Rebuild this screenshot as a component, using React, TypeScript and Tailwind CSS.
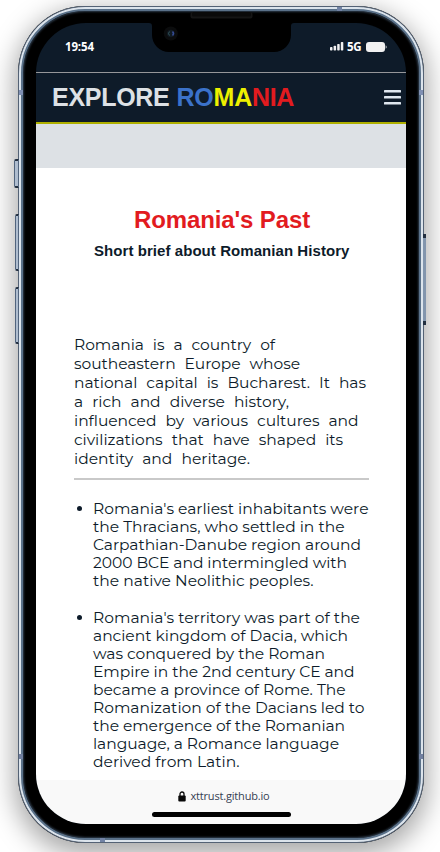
import { useLayoutEffect, useRef } from "react";

type FitProps = { text: string; width: number; className?: string };

// One line of copy whose tracking is tuned so that it spans the given width.
function FitLine({ text, width, className = "" }: FitProps) {
  const ref = useRef<HTMLSpanElement>(null);
  useLayoutEffect(() => {
    const el = ref.current;
    if (!el) return;
    el.style.letterSpacing = "0px";
    const natural = el.getBoundingClientRect().width;
    el.style.letterSpacing = `${(width - natural) / text.length}px`;
  }, [text, width]);
  return (
    <span className="block whitespace-nowrap">
      <span ref={ref} className={`inline-block whitespace-nowrap ${className}`}>{text}</span>
    </span>
  );
}

const intro: [string, number][] = [
  ["Romania is a country of", 201],
  ["southeastern Europe whose", 226],
  ["national capital is Bucharest. It has", 292],
  ["a rich and diverse history,", 215],
  ["influenced by various cultures and", 284.5],
  ["civilizations that have shaped its", 269],
  ["identity and heritage.", 176],
];

const facts: [string, number][][] = [
  [
    ["Romania's earliest inhabitants were", 275.5],
    ["the Thracians, who settled in the", 251.5],
    ["Carpathian-Danube region around", 268],
    ["2000 BCE and intermingled with", 254],
    ["the native Neolithic peoples.", 220.5],
  ],
  [
    ["Romania's territory was part of the", 267],
    ["ancient kingdom of Dacia, which", 255],
    ["was conquered by the Roman", 232],
    ["Empire in the 2nd century CE and", 261.5],
    ["became a province of Rome. The", 252.5],
    ["Romanization of the Dacians led to", 271.5],
    ["the emergence of the Romanian", 252],
    ["language, a Romance language", 246],
    ["derived from Latin.", 146.5],
  ],
];

const sideButton = "absolute rounded-l-[2px] border border-[#51647d] border-y-[#222f40] border-y-2 bg-[#afbdcf]";

function StatusBar() {
  return (
    <div className="flex h-[50px] shrink-0 justify-between border-b border-[#96979a] pl-[29px] pr-[19px] pt-[15px]">
      <span className="font-['Open_Sans',sans-serif] text-[11.5px] font-bold leading-[17px] tracking-[-0.15px] text-white">19:54</span>
      <div className="flex h-[17px] items-center">
        <svg className="-mt-px" width="14" height="9" viewBox="0 0 14 9" fill="#f1f1f1">
          <rect x="0" y="5" width="2.5" height="3.5" rx=".7" />
          <rect x="3.6" y="3.7" width="2.5" height="4.8" rx=".7" />
          <rect x="7.2" y="2" width="2.5" height="6.5" rx=".7" />
          <rect x="10.8" y="0" width="2.5" height="8.5" rx=".7" />
        </svg>
        <span className="ml-[3px] w-[15px] font-['Open_Sans',sans-serif] text-[11.5px] font-bold leading-[17px] tracking-[-0.3px] text-white">5G</span>
        <svg className="ml-[4px]" width="21" height="10" viewBox="0 0 21 10" fill="#f1f1f1">
          <rect x="0" y="0" width="19" height="10" rx="3" />
          <path d="M19.7 3.2c1.2.8 1.2 2.8 0 3.6z" />
        </svg>
      </div>
    </div>
  );
}

export default function App() {
  return (
    <div className="flex h-[852px] w-[440px] overflow-hidden bg-white pl-[18px] pt-[6px]">
      <div className="relative h-[837px] w-[406px] shrink-0 rounded-[67px] bg-black shadow-[0_8px_26px_4px_rgba(0,0,0,0.34)]">
        <div className={`${sideButton} -left-[4px] top-[153px] h-[29px] w-[5px]`} />
        <div className={`${sideButton} -left-[3px] top-[208px] h-[57px] w-[4px]`} />
        <div className={`${sideButton} -left-[3px] top-[281px] h-[57px] w-[4px]`} />
        <div className="absolute -right-[2px] top-[228px] h-[91px] w-[3px] border-y-4 border-[#222f40] bg-[#8295ad]" />

        <div className="h-full w-full rounded-[67px] border border-[#546275] bg-[#dce4ec] p-[2px]">
          <div className="h-full w-full rounded-[64px] border-[2.5px] border-[#5a7189] bg-black px-[13px] pb-[14px] pt-[12px] shadow-[inset_0_0_2px_1px_#2c3948]">
            <div className="flex h-[801px] w-[370px] flex-col overflow-hidden rounded-[50px] bg-[#0e1b29]">
              <StatusBar />
              <header className="flex h-[51px] shrink-0 items-center justify-between border-b-2 border-[#afb000] pl-[16px] pr-[5px]">
                <h1 className="-mt-[2px] whitespace-nowrap font-['Liberation_Sans',sans-serif] text-[25px] font-bold leading-[30px] text-[#dde1e5]">
                  <FitLine text="EXPLORE" width={117.5} className="align-top" />
                </h1>
                <div className="-ml-[3px] -mt-[2px] mr-auto flex pl-[10px] font-['Liberation_Sans',sans-serif] text-[25px] font-bold leading-[30px]">
                  <span className="text-[#3b72ca]"><FitLine text="RO" width={37} /></span>
                  <span className="text-[#edf000]"><FitLine text="MA" width={38.5} /></span>
                  <span className="text-[#e21b1f]"><FitLine text="NIA" width={42} /></span>
                </div>
                <svg width="17" height="15" viewBox="0 0 17 15" fill="#dfe7ef">
                  <rect width="17" height="2.5" rx=".6" />
                  <rect y="6" width="17" height="2.5" rx=".6" />
                  <rect y="12" width="17" height="2.5" rx=".6" />
                </svg>
              </header>
              <div className="h-[44px] shrink-0 bg-[#dde1e5]" />
              <main className="h-[612px] shrink-0 overflow-hidden bg-white pl-[38px] pr-[37px] text-[#0d1b2a]">
                <h2 className="ml-[60px] mt-[37px] font-['Liberation_Sans',sans-serif] text-[24px] font-bold leading-[30px] text-[#e21b1f]">
                  <FitLine text="Romania's Past" width={176} />
                </h2>
                <h3 className="ml-[20px] mt-[6px] font-['Liberation_Sans',sans-serif] text-[15px] font-bold leading-[20px]">
                  <FitLine text="Short brief about Romanian History" width={255.5} />
                </h3>
                <div className="mt-[74px] font-[Montserrat,Inter,sans-serif] text-[15.5px] leading-[19px]">
                  {intro.map(([text, width]) => (
                    <FitLine key={text} text={text} width={width} className="[word-spacing:5px]" />
                  ))}
                </div>
                <hr className="mt-[10px] border-0 border-l border-t-2 border-[#c9c9c9]" />
                <ul className="ml-[19px] mt-[20px] flex list-none flex-col gap-[19px] font-[Montserrat,Inter,sans-serif] text-[15.5px] leading-[18px]">
                  {facts.map((lines) => (
                    <li key={lines[0][0]} className="flex">
                      <span className="-ml-[16.5px] mr-[11.5px] mt-[6px] h-[5px] w-[5px] shrink-0 rounded-full bg-[#0d1b2a]" />
                      <div>
                        {lines.map(([text, width]) => (
                          <FitLine key={text} text={text} width={width} />
                        ))}
                      </div>
                    </li>
                  ))}
                </ul>
              </main>
              <footer className="flex h-[44px] shrink-0 flex-col items-center bg-[#f9f9f9]">
                <div className="mt-[7px] flex h-[18px] items-center pl-[5px]">
                  <svg width="8" height="11" viewBox="0 0 8 11">
                    <path d="M2 5V3a2 2 0 0 1 4 0v2" fill="none" stroke="#090909" strokeWidth="1.3" />
                    <rect x=".3" y="4.4" width="7.4" height="6" rx="1" fill="#090909" />
                  </svg>
                  <div className="ml-[5px] font-['Open_Sans',sans-serif] text-[11px] leading-[18px] text-[#354052]">
                    <FitLine text="xttrust.github.io" width={79} />
                  </div>
                </div>
                <div className="mt-[7px] h-[5px] w-[139px] rounded-full bg-black" />
              </footer>
            </div>
          </div>
        </div>

        <svg className="absolute left-[128px] top-[6px]" width="151" height="42" viewBox="0 0 151 42">
          <path d="M3 11Q6 11 6 14V23A17 17 0 0 0 23 40H128A17 17 0 0 0 145 23V14Q145 11 148 11V9H3Z" fill="#000" />
          <rect x="44.5" y="0" width="62" height="6.5" rx="2" fill="#151515" />
          <rect x="46" y="0" width="59" height="4.5" rx="1.5" fill="#0a0a0a" />
          <circle cx="24.8" cy="21.5" r="7" fill="#0b0c0d" />
          <circle cx="24.8" cy="21.5" r="3.8" fill="#111a22" />
          <path d="M23.5 19.5q-2 2 0 4" stroke="#33585d" fill="none" />
          <path d="M26.5 19.5q2 2 0 4" stroke="#354b93" strokeWidth="1.5" fill="none" />
        </svg>
        <div className="absolute left-px top-[84px] h-[5px] w-[4px] bg-[#8090b3]" />
        <div className="absolute right-px top-[84px] h-[5px] w-[4px] bg-[#8090b3]" />
        <div className="absolute left-px top-[748px] h-[5px] w-[4px] bg-[#717f9f]" />
        <div className="absolute right-px top-[748px] h-[5px] w-[4px] bg-[#717f9f]" />
        <div className="absolute left-[319px] top-px h-[4px] w-[5px] bg-[#7283a5]" />
        <div className="absolute bottom-px left-[82px] h-[4px] w-[5px] bg-[#7283a5]" />
      </div>
    </div>
  );
}
